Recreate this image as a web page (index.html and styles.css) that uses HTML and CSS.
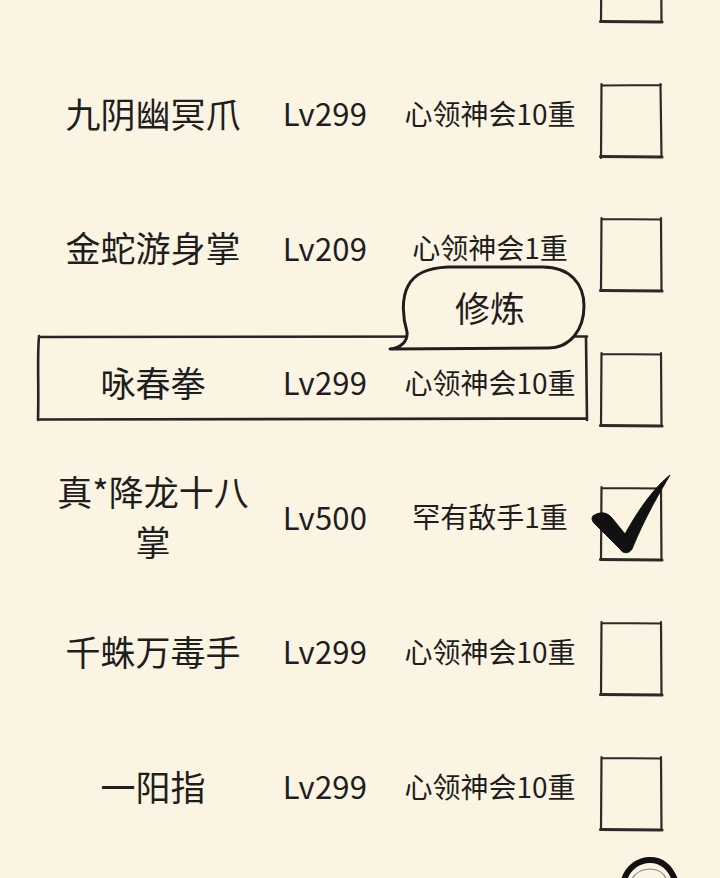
FILE: index.html
```html
<!DOCTYPE html>
<html lang="zh-CN">
<head>
<meta charset="utf-8">
<title>武学列表</title>
<link rel="stylesheet" href="styles.css">
</head>
<body>
<main class="skill-list">
  <div class="row">
    <span class="name"></span><span class="level"></span><span class="rank"></span>
    <svg class="box" viewBox="0 0 62 74"><path d="M1.5,1 L61,1.5 M61,0 L61.5,73 M1.5,0 L1,73"/><path class="base" d="M0.5,72.5 L62,73"/></svg>
  </div>

  <div class="row">
    <span class="name">九阴幽冥爪</span><span class="level">Lv299</span><span class="rank">心领神会10重</span>
    <svg class="box" viewBox="0 0 62 74"><path d="M1.5,1.5 L61,1 M60.5,0 L61.5,73 M1.5,0 L1,74"/><path class="base" d="M0.5,72.5 L62,73"/></svg>
  </div>

  <div class="row">
    <span class="name">金蛇游身掌</span><span class="level">Lv209</span><span class="rank">心领神会1重</span>
    <svg class="box" viewBox="0 0 62 74"><path d="M1.5,1 L61,1.5 M61,0 L61.5,73 M1.5,0 L1,73"/><path class="base" d="M0.5,72.5 L62,73"/></svg>
  </div>

  <div class="row current">
    <svg class="frame" viewBox="0 0 552 88" preserveAspectRatio="none">
      <path d="M4,3 L551,2.5 M550,4 L551,86 M2,85.5 L551,84.5 M3,2 C1,25 3,50 2,86"/>
    </svg>
    <span class="name">咏春拳</span><span class="level">Lv299</span><span class="rank">心领神会10重</span>
    <svg class="box" viewBox="0 0 62 74"><path d="M1.5,1 L61,1.5 M61,0 L61.5,73 M1.5,0 L1,73"/><path class="base" d="M0.5,72.5 L62,73"/></svg>
    <div class="bubble">
      <svg class="bubble-shape" viewBox="0 0 200 90">
        <path d="M2,85 C12,84 20,78 19,68 C15,55 13,35 20,22 C26,10 38,4 60,3 L155,3 C182,3 196,20 196,42 C196,66 182,84 160,84 Z"/>
      </svg>
      <span class="bubble-text">修炼</span>
    </div>
  </div>

  <div class="row">
    <span class="name">真*降龙十八掌</span><span class="level">Lv500</span><span class="rank">罕有敌手1重</span>
    <svg class="box checked" viewBox="0 0 62 74">
      <path d="M1.5,1 L61,1.5 M61,0 L61.5,73 M1.5,0 L1,73"/><path class="base" d="M0.5,72.5 L62,73"/>
      <path class="tick" d="M-7,29 C0,24 7,25 12,31 L25,47 C40,20 55,0 70,-12 C60,5 45,30 32,62 C29,67 23,67 20,62 L-4,38 C-8,35 -9,31 -7,29 Z"/>
    </svg>
  </div>

  <div class="row">
    <span class="name">千蛛万毒手</span><span class="level">Lv299</span><span class="rank">心领神会10重</span>
    <svg class="box" viewBox="0 0 62 74"><path d="M1.5,1 L61,1.5 M61,0 L61.5,73 M1.5,0 L1,73"/><path class="base" d="M0.5,72.5 L62,73"/></svg>
  </div>

  <div class="row">
    <span class="name">一阳指</span><span class="level">Lv299</span><span class="rank">心领神会10重</span>
    <svg class="box" viewBox="0 0 62 74"><path d="M1.5,1 L61,1.5 M61,0 L61.5,73 M1.5,0 L1,73"/><path class="base" d="M0.5,72.5 L62,73"/></svg>
  </div>
</main>

<button class="fab" aria-label="菜单">
  <svg viewBox="0 0 76 28">
    <path class="ring" d="M14,28 C18,15 29,8 40,8 C52,8 60,15 65,28"/>
    <path class="ring-inner" d="M21,28 C25,21 32,17 40,17 C48,17 54,21 57,28"/>
  </svg>
</button>
</body>
</html>
```

FILE: styles.css
```css
html, body {
  margin: 0;
  padding: 0;
  background: #fcf4e3;
  height: 100%;
  overflow: hidden;
}

body {
  font-family: "Noto Sans CJK SC", "Noto Sans", sans-serif;
  color: #1e1e1e;
}

.skill-list {
  margin-top: -89.3px;
  display: flex;
  flex-direction: column;
}

.row {
  position: relative;
  height: 134.6px;
  display: grid;
  grid-template-columns: 200px 144px 186px 62px;
  align-items: center;
  padding-left: 53px;
}

.name {
  font-size: 35px;
  line-height: 1.43;
  text-align: center;
}

.level {
  font-size: 31px;
  text-align: center;
  letter-spacing: 0.2px;
}

.rank {
  font-size: 28px;
  text-align: center;
}

.box {
  width: 62px;
  height: 74px;
  margin-left: 17px;
  margin-top: 16px;
  overflow: visible;
}

.box path {
  fill: none;
  stroke: #2a2a2a;
  stroke-width: 2.2;
  stroke-linecap: round;
}

.box path.base {
  stroke-width: 3.2;
}

.box path.tick {
  fill: #111;
  stroke: #111;
  stroke-width: 1;
  stroke-linejoin: round;
}

/* frame around the selected row */
.frame {
  position: absolute;
  left: 36px;
  top: 20px;
  width: 552px;
  height: 88px;
  overflow: visible;
  pointer-events: none;
}

.frame path {
  fill: none;
  stroke: #252525;
  stroke-width: 2.6;
  stroke-linecap: round;
  vector-effect: non-scaling-stroke;
}

/* speech bubble over the selected row */
.bubble {
  position: absolute;
  left: 388px;
  top: -50.5px;
  width: 200px;
  height: 90px;
  z-index: 2;
  display: flex;
  align-items: center;
  justify-content: center;
}

.bubble-shape {
  position: absolute;
  inset: 0;
  width: 100%;
  height: 100%;
  overflow: visible;
}

.bubble-shape path {
  fill: #fcf4e3;
  stroke: #1e1e1e;
  stroke-width: 3;
  stroke-linejoin: round;
}

.bubble-text {
  position: relative;
  font-size: 35px;
  padding-left: 4px;
  margin-top: -4px;
}

/* floating ink button, bottom right */
.fab {
  position: fixed;
  left: 610px;
  top: 852px;
  width: 76px;
  height: 28px;
  padding: 0;
  border: 0;
  background: none;
}

.fab svg {
  display: block;
  width: 76px;
  height: 28px;
}

.fab .ring {
  fill: none;
  stroke: #111;
  stroke-width: 6;
  stroke-linecap: round;
}

.fab .ring-inner {
  fill: none;
  stroke: #888;
  stroke-width: 1.2;
}
```
